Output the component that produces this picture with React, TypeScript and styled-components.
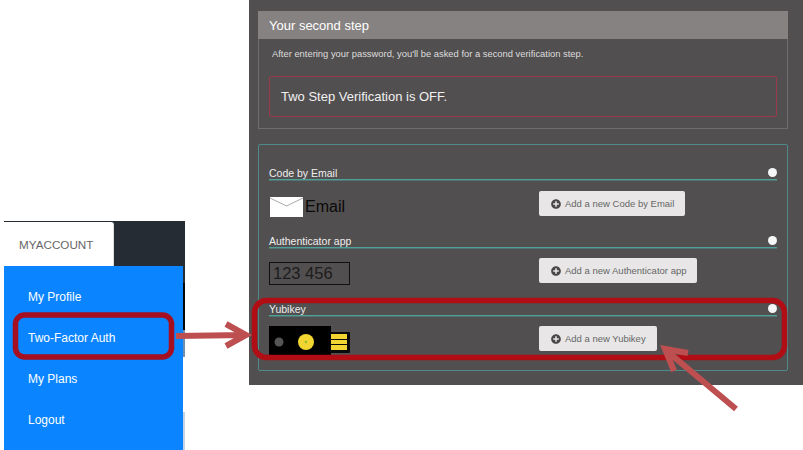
import styled, { createGlobalStyle } from 'styled-components';
import { FaPlusCircle } from 'react-icons/fa';

const GlobalStyle = createGlobalStyle`
  html, body {
    margin: 0;
    padding: 0;
    background: #fff;
    font-family: "Liberation Sans", Arial, sans-serif;
  }
`;

const Page = styled.div`
  position: relative;
  width: 803px;
  height: 450px;
  overflow: hidden;
  display: flex;
  align-items: flex-end;
  padding-left: 4px;
  box-sizing: border-box;
  background: #fff;
`;

const Sidebar = styled.nav`
  width: 181px;
  height: 229px;
  display: flex;
  flex-direction: column;
  background: #fff;
`;

const TabBar = styled.div`
  height: 45px;
  flex-shrink: 0;
  background: #262c33;
  display: flex;
`;

const Tab = styled.div`
  width: 110px;
  margin-top: 1px;
  background: #fff;
  border-right: 1px solid #ddd;
  border-radius: 0 3px 0 0;
  box-sizing: border-box;
  padding-left: 15px;
  display: flex;
  align-items: center;
  font-size: 11.7px;
  color: #666;
`;

const SidebarBody = styled.div`
  flex: 1;
  display: flex;
`;

const Menu = styled.ul`
  width: 179px;
  margin: 0;
  padding: 10px 0 0;
  list-style: none;
  background: #0a85ff;
`;

const MenuEdge = styled.div`
  width: 2px;
  background: linear-gradient(
    #262c33 0 17px,
    #05070a 17px 64px,
    #6f8fb0 64px 91px,
    #fff 91px 146px,
    #c3d2e4 146px
  );
`;

const MenuItem = styled.li`
  height: 41px;
  padding-left: 24px;
  display: flex;
  align-items: center;
  font-size: 12px;
  color: #fff;
`;

const Panel = styled.main`
  width: 554px;
  height: 385px;
  margin-left: 64px;
  align-self: flex-start;
  box-sizing: border-box;
  padding: 11px 15px 0 9px;
  background: #524f50;
  display: flex;
  flex-direction: column;
  gap: 15px;
`;

const StepCard = styled.section`
  height: 118px;
  box-sizing: border-box;
  border: 1px solid #6f6c6d;
  border-top: 0;
`;

const StepHeading = styled.h2`
  height: 28px;
  margin: 0 -1px;
  padding-left: 11px;
  background: #868282;
  display: flex;
  align-items: center;
  font-size: 13px;
  font-weight: 400;
  color: #fff;
`;

const StepText = styled.p`
  margin: 9px 0 0 13px;
  height: 12px;
  line-height: 12px;
  font-size: 9.4px;
  color: #ddd;
`;

const Alert = styled.div`
  height: 41px;
  margin: 16px 10px 0;
  box-sizing: border-box;
  padding-left: 11px;
  border: 1px solid #9a3a4c;
  border-radius: 2px;
  display: flex;
  align-items: center;
  font-size: 13px;
  color: #f1f1f1;
`;

const MethodsCard = styled.section`
  height: 227px;
  box-sizing: border-box;
  padding: 20px 10px 0;
  border: 1px solid #4f8a8a;
  border-radius: 2px;
  display: flex;
  flex-direction: column;
  gap: 8px;
`;

const Method = styled.div`
  height: 60px;
`;

const MethodTitle = styled.div`
  position: relative;
  height: 15px;
  box-sizing: border-box;
  line-height: 16px;
  border-bottom: 1px solid #50a09a;
  box-shadow: 0 1px 0 rgba(80, 160, 154, 0.45);
  font-size: 10.5px;
  color: #eee;
`;

const Dot = styled.span`
  position: absolute;
  right: 0;
  top: 3px;
  width: 9px;
  height: 9px;
  border-radius: 50%;
  background: #f4f6f8;
`;

const MethodRow = styled.div<{ $pad?: number }>`
  display: grid;
  grid-template-columns: 270px auto;
  justify-content: start;
  align-items: start;
  padding-top: ${(p) => p.$pad ?? 10}px;
`;

const Visual = styled.div<{ $top?: number; $left?: number }>`
  display: flex;
  align-items: center;
  margin-top: ${(p) => p.$top ?? 0}px;
  margin-left: ${(p) => p.$left ?? 0}px;
`;

const EmailLabel = styled.span`
  margin-left: 2px;
  font-size: 16px;
  color: #0a0a0a;
`;

const CodeBox = styled.div`
  width: 81px;
  height: 23px;
  box-sizing: border-box;
  padding-left: 3px;
  border: 1px solid #111;
  display: flex;
  align-items: center;
  font-size: 16.5px;
  color: #1c1c1c;
`;

const AddButton = styled.button`
  height: 25px;
  padding: 0 11px 0 12px;
  border: 0;
  border-radius: 2px;
  background: #e8e6e6;
  display: inline-flex;
  align-items: center;
  gap: 4px;
  font-family: inherit;
  font-size: 9.5px;
  color: #666;
  svg {
    width: 10px;
    height: 10px;
    color: #4a4748;
  }
`;

const Annotations = styled.svg`
  position: absolute;
  inset: 0;
  width: 803px;
  height: 450px;
  pointer-events: none;
`;

function EnvelopeIcon() {
  return (
    <svg width="33" height="20" viewBox="0 0 33 20">
      <rect width="33" height="20" fill="#fff" />
      <path d="M0 1 L16.5 9 L33 1" fill="none" stroke="#a9a9a9" strokeWidth="1" />
    </svg>
  );
}

function YubikeyIcon() {
  return (
    <svg width="82" height="29" viewBox="0 0 82 29">
      <rect x="0" y="0" width="62" height="29" fill="#000" />
      <rect x="61" y="6" width="20" height="21" rx="1" fill="#0a0a0a" />
      <circle cx="10" cy="16" r="4.5" fill="#555" />
      <circle cx="37" cy="16" r="8" fill="#f2d530" />
      <circle cx="37" cy="16" r="1.3" fill="#8fbf30" />
      <rect x="62" y="8" width="16" height="5" fill="#f2d530" />
      <rect x="62" y="14" width="16" height="4" fill="#f2d530" />
      <rect x="62" y="19" width="16" height="5" fill="#f2d530" />
    </svg>
  );
}

function App() {
  return (
    <Page>
      <GlobalStyle />
      <Sidebar>
        <TabBar>
          <Tab>MYACCOUNT</Tab>
        </TabBar>
        <SidebarBody>
          <Menu>
            <MenuItem>My Profile</MenuItem>
            <MenuItem>Two-Factor Auth</MenuItem>
            <MenuItem>My Plans</MenuItem>
            <MenuItem>Logout</MenuItem>
          </Menu>
          <MenuEdge />
        </SidebarBody>
      </Sidebar>

      <Panel>
        <StepCard>
          <StepHeading>Your second step</StepHeading>
          <StepText>After entering your password, you'll be asked for a second verification step.</StepText>
          <Alert>Two Step Verification is OFF.</Alert>
        </StepCard>

        <MethodsCard>
          <Method>
            <MethodTitle>
              Code by Email
              <Dot />
            </MethodTitle>
            <MethodRow $pad={11}>
              <Visual $top={6} $left={1}>
                <EnvelopeIcon />
                <EmailLabel>Email</EmailLabel>
              </Visual>
              <AddButton>
                <FaPlusCircle />
                Add a new Code by Email
              </AddButton>
            </MethodRow>
          </Method>
          <Method>
            <MethodTitle>
              Authenticator app
              <Dot />
            </MethodTitle>
            <MethodRow>
              <Visual $top={4}>
                <CodeBox>123 456</CodeBox>
              </Visual>
              <AddButton>
                <FaPlusCircle />
                Add a new Authenticator app
              </AddButton>
            </MethodRow>
          </Method>
          <Method>
            <MethodTitle>
              Yubikey
              <Dot />
            </MethodTitle>
            <MethodRow>
              <Visual>
                <YubikeyIcon />
              </Visual>
              <AddButton>
                <FaPlusCircle />
                Add a new Yubikey
              </AddButton>
            </MethodRow>
          </Method>
        </MethodsCard>
      </Panel>

      <Annotations viewBox="0 0 803 450">
        <rect x="15.5" y="315" width="156" height="42" rx="9" fill="none" stroke="#a50f1f" strokeWidth="5.5" />
        <rect x="254.5" y="300.5" width="530" height="57" rx="12" fill="none" stroke="#b00d14" strokeWidth="5.5" />
        <path d="M176 336 L245 335 M226 324 L246 335 L226 346" fill="none" stroke="#bd4f50" strokeWidth="6" />
        <path d="M736 409 L668 352 M688 353 L665 349 L674 371" fill="none" stroke="#bd4f50" strokeWidth="6" />
      </Annotations>
    </Page>
  );
}

export default App;
